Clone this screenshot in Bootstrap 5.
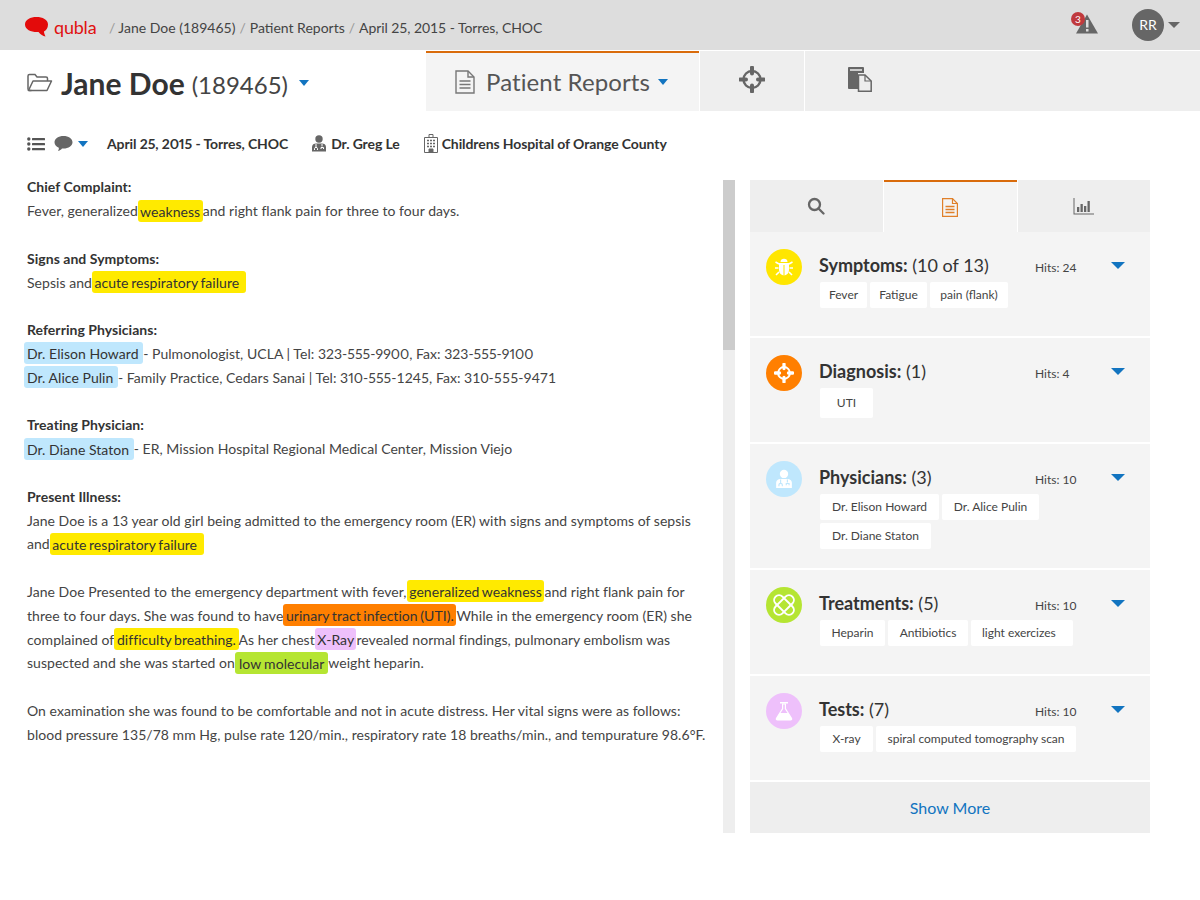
<!DOCTYPE html>
<html lang="en">
<head>
<meta charset="utf-8">
<title>qubla</title>
<link href="https://cdn.jsdelivr.net/npm/bootstrap@5.3.0/dist/css/bootstrap.min.css" rel="stylesheet">
<style>
html,body{height:900px;overflow:hidden}
body{font-family:Lato,"Liberation Sans",sans-serif;font-size:14px;color:#444;background:#fff}
.topbar{height:50px;background:#ddd;padding-left:25px;padding-right:20px}
.logo{margin-top:4px}
.brand{color:#e01010;font-size:18px;font-weight:400;margin-left:5px;width:55px;line-height:1;margin-top:4px;letter-spacing:-.2px}
.crumbs{--bs-breadcrumb-margin-bottom:0;--bs-breadcrumb-divider-color:#999;--bs-breadcrumb-item-padding-x:4px;font-size:14px;color:#444;margin-top:4px}
.crumbs .breadcrumb-item.active{color:#444;letter-spacing:-.07px}
.crumbs .first::before{content:"/";color:#999;padding-right:3px}
.alert-wrap{position:relative;width:22px;height:20px;margin-right:34px;margin-top:-6px}
.count{position:absolute;left:-5px;top:0;width:14px;height:14px;border-radius:50%;background:#c0393d;color:#fff;font-size:10px;line-height:14px;text-align:center}
.avatar{width:32px;height:32px;border-radius:50%;background:#666;color:#fff;font-size:14px;line-height:32px;text-align:center}
.caret-g{width:0;height:0;border-left:6px solid transparent;border-right:6px solid transparent;border-top:6px solid #666;margin-left:4px}
.caret-b{display:inline-block;width:0;height:0;border-left:5.5px solid transparent;border-right:5.5px solid transparent;border-top:6px solid #1274c0}
.tabrow{height:60px;margin-top:1px}
.head-left{width:426px;padding-left:27px}
.head-left svg{margin-top:2px}
.pname{font-size:30px;font-weight:700;color:#333;margin-left:8px;line-height:1;margin-top:4px}
.pid{font-size:24px;font-weight:400;color:#444;margin-left:7px;margin-right:11px;line-height:1;margin-top:8px}
.head-left .caret-b{margin-top:3px}
.toptab{background:#eee;height:60px;margin-right:1px}
.tab-rep{width:273px;background:#f4f4f4;border-top:2px solid #d96b0b;padding-left:29px;font-size:24px;color:#555}
.tab-rep span.lbl{margin-left:11px;margin-right:8px;letter-spacing:.1px}
.tab-t{width:104px}
.tab-t svg,.tab-f svg{margin-top:-4px}
.tab-f{width:110px;margin-right:0}
.tabfill{flex:1;background:#eee}
.infoline{height:69px;padding-left:27px;padding-bottom:4px;font-weight:700;color:#333;font-size:14px;letter-spacing:-.1px;font-variant-numeric:proportional-nums}
.date-txt{margin-left:3px;margin-right:23px}
.main{padding-left:27px;height:653px}
.doc{width:683px;line-height:23.8px;margin-top:-4.6px;color:#444;letter-spacing:.04px}
.doc p{margin:0 0 23.8px}
.doc b{font-weight:700;color:#333;display:block}
.pn{font-variant-numeric:proportional-nums}
.hl{padding:2.5px 0;border-radius:3px;color:#333;word-spacing:-1px}
.hl-y{background:#ffea00}.hl-o{background:#ff7f00}.hl-p{background:#eec0fb}
.hl-b{background:#bfe7fd;margin-left:-3px;padding:2.5px 1px 2.5px 3px;word-spacing:0}
.hl-g{background:#b5e532;padding:2.5px 1px;word-spacing:-.5px}
.hl-end{padding-right:4px}
.scrolltrack{width:12px;height:653px;background:#eee;margin-left:13px}
.scrollthumb{height:170px;background:#ccc}
.side{width:400px;margin-left:15px;height:653px}
.stabs{height:52px}
.stab{background:#eee;height:52px;flex:1}
.stab.on{background:#f4f4f4;border-top:2px solid #d96b0b;margin:0 1px;flex:0 0 133px}
.sitem{background:#f4f4f4;margin-bottom:2px;padding:17px 16px 0;height:104px}
.sitem.tall{height:124px}
.circle{width:36px;height:36px;border-radius:50%;flex:none;margin-right:17px}
.c-y{background:#ffe600}.c-o{background:#ff7f00}.c-b{background:#bfe7fd}.c-g{background:#b5e532}.c-p{background:#eec0fb}
.sbody{flex:1;min-width:0}
.shead{height:36px;margin-top:-3px;padding-top:9px}
.stitle{font-size:18px;color:#333;width:216px;line-height:1.2}
.stitle b{font-weight:700}
.hits{font-size:12px;color:#444;width:76px;padding-top:4px}
.caret-l{width:0;height:0;border-left:7px solid transparent;border-right:7px solid transparent;border-top:7px solid #1274c0;margin-top:7px}
.chips{gap:3px;margin-left:1px}
.chip{background:#fff;font-size:12px;color:#444;height:26px;line-height:25px;text-align:center;border-radius:2px;white-space:nowrap}
.chip.big{height:30px;line-height:30px}
.w47{width:47px}.w53{width:53px}.w57{width:57px}.w65{width:65px}.w78{width:78px}.w80{width:80px}.w97{width:97px}.w102{width:102px;text-align:left;padding-left:11px}.w111{width:111px}.w119{width:119px}.w200{width:200px}
.more{height:51px;background:#eee;color:#1274c0;font-size:16px;text-decoration:none}
</style>
</head>
<body>
<nav class="topbar d-flex align-items-center">
  <svg class="logo" width="24" height="20" viewBox="0 0 24 20"><path fill="#e30b0b" d="M11.500 0C17.500 0 23 2.500 23 7.500C23 11 21 13.500 19 14.500C19 16 19.800 18 20.500 19.500C18 19 15.500 17.500 13.500 15C7 15.500 0 13 0 7.500C0 2.500 5.500 0 11.500 0Z"/></svg>
  <span class="brand">qubla</span>
  <ol class="breadcrumb crumbs align-items-center">
    <li class="breadcrumb-item first">Jane Doe (189465)</li>
    <li class="breadcrumb-item">Patient Reports</li>
    <li class="breadcrumb-item active">April 25, 2015 - Torres, CHOC</li>
  </ol>
  <div class="ms-auto d-flex align-items-center">
    <div class="alert-wrap">
      <svg width="22" height="20" viewBox="0 0 22 20"><path fill="#666" d="M11 0.500L22 19.500H0Z"/><rect x="10" y="6" width="2.500" height="7.500" fill="#ddd"/><rect x="10" y="15" width="2.500" height="2.500" fill="#ddd"/></svg>
      <span class="count">3</span>
    </div>
    <span class="avatar">RR</span><span class="caret-g"></span>
  </div>
</nav>

<div class="tabrow d-flex">
  <div class="head-left d-flex align-items-center">
    <svg width="26" height="19" viewBox="0 0 26 19" fill="none" stroke="#666" stroke-width="1.500"><path d="M4.500 17.500H2.500C1.500 17.500 1 17 1 16V3C1 2 1.500 1.500 2.500 1.500H8L10 4H19C20 4 20.500 4.500 20.500 5.500V8"/><path d="M1.500 17.500L6 8H24.500L20 17.500Z" stroke-linejoin="round"/></svg>
    <span class="pname">Jane Doe</span><span class="pid">(189465)</span><span class="caret-b"></span>
  </div>
  <div class="toptab tab-rep d-flex align-items-center">
    <svg width="20" height="24" viewBox="0 0 20 24" fill="none" stroke="#777" stroke-width="1.400"><path d="M1 1H13L19 7V23H1Z"/><path d="M13 1V7H19"/><path d="M4.500 11H15.500M4.500 14.500H15.500M4.500 18H15.500"/></svg>
    <span class="lbl">Patient Reports</span><span class="caret-b"></span>
  </div>
  <div class="toptab tab-t d-flex align-items-center justify-content-center">
    <svg width="26" height="27" viewBox="0 0 26 27" fill="none" stroke="#666"><circle cx="13" cy="13.500" r="8.500" stroke-width="2.400"/><path d="M13 1.500V7.500M13 19.500V25.500M1 13.500H7M19 13.500H25" stroke-width="4" stroke-linecap="round"/></svg>
  </div>
  <div class="toptab tab-f d-flex align-items-center justify-content-center">
    <svg width="24" height="25" viewBox="0 0 24 25"><path fill="#666" d="M0 1C0 .5 .5 0 1 0H15C15.500 0 16 .5 16 1V6H10V22H1C.5 22 0 21.500 0 21Z"/><rect x="2" y="2" width="12" height="2" fill="#ccc"/><path fill="#eee" stroke="#666" stroke-width="1.500" d="M10.500 8H17L23.200 14V24.200H10.500Z"/><path fill="none" stroke="#666" stroke-width="1.200" d="M17 8V14H23"/></svg>
  </div>
  <div class="tabfill"></div>
</div>

<div class="infoline d-flex align-items-center">
  <svg width="18" height="14" viewBox="0 0 18 14" fill="#555"><circle cx="1.800" cy="2" r="1.700"/><circle cx="1.800" cy="7" r="1.700"/><circle cx="1.800" cy="12" r="1.700"/><rect x="5" y="1" width="13" height="2.200" rx=".5"/><rect x="5" y="6" width="13" height="2.200" rx=".5"/><rect x="5" y="11" width="13" height="2.200" rx=".5"/></svg>
  <svg class="ms-2" width="21" height="17" viewBox="0 0 20 17" fill="#666"><path d="M10 1C15 1 19 3.500 19 7.300C19 11 15 13.600 10 13.600C9.500 13.600 9 13.600 8.500 13.500C7.500 14.800 6 15.700 4.500 16C5.200 15 5.500 13.800 5.300 12.800C2.700 11.700 1 9.700 1 7.300C1 3.500 5 1 10 1Z"/></svg>
  <span class="caret-b ms-1 me-3"></span>
  <span class="date-txt">April 25, 2015 - Torres, CHOC</span>
  <svg class="me-1" width="16" height="17" viewBox="0 0 16 17"><circle cx="8" cy="4" r="3.700" fill="#666"/><path fill="#666" d="M1 16.500V12C1 9.500 3 8.500 5 8.500H11C13 8.500 15 9.500 15 12V16.500Z"/><path fill="none" stroke="#fff" stroke-width="1" d="M5 9V12M11 9V11.500M3.500 15V13.500C3.500 12 6.500 12 6.500 13.500V15M10 14V12.500H12.500V14"/></svg>
  <span class="me-4">Dr. Greg Le</span>
  <svg class="me-1" width="14" height="19" viewBox="0 0 14 19" fill="none" stroke="#666"><path d="M.5 18.500V3.500H13.500V18.500Z"/><path d="M5 3.500V.5H9V3.500"/><path d="M3 6.500H5M6 6.500H8M9 6.500H11M3 9.500H5M6 9.500H8M9 9.500H11M3 12.500H5M6 12.500H8M9 12.500H11" stroke-width="1.500"/><path d="M5 18.500V15H9V18.500" fill="#666"/></svg>
  <span>Childrens Hospital of Orange County</span>
</div>

<div class="main d-flex">
  <div class="doc">
    <p><b>Chief Complaint:</b>Fever, generalized<span class="hl hl-y"> weakness </span>and right flank pain for three to four days.</p>
    <p><b>Signs and Symptoms:</b>Sepsis and<span class="hl hl-y hl-end"> acute respiratory failure&nbsp;</span></p>
    <p><b>Referring Physicians:</b><span class="hl hl-b">Dr. Elison Howard </span>- Pulmonologist, UCLA | Tel: <span class="pn">323-555-9900, Fax: 323-555-9100</span><br><span class="hl hl-b">Dr. Alice Pulin </span>- Family Practice, Cedars Sanai | Tel: <span class="pn">310-555</span>-1245, Fax: 310-555-9471</p>
    <p><b>Treating Physician:</b><span class="hl hl-b">Dr. Diane Staton </span>- ER, Mission Hospital Regional Medical Center, Mission Viejo</p>
    <p><b>Present Illness:</b>Jane Doe is a 13 year old girl being admitted to the emergency room (ER) with signs and symptoms of sepsis and<span class="hl hl-y hl-end"> acute respiratory failure&nbsp;</span></p>
    <p>Jane Doe Presented to the emergency department with fever,<span class="hl hl-y"> generalized weakness </span>and right flank pain for three to four days. She was found to have<span class="hl hl-o"> urinary tract infection (UTI). </span>While in the emergency room (ER) she complained of<span class="hl hl-y"> difficulty breathing. </span>As her chest<span class="hl hl-p"> X-Ray </span>revealed normal findings, pulmonary embolism was suspected and she was started on<span class="hl hl-g"> low molecular </span>weight heparin.</p>
    <p>On examination she was found to be comfortable and not in acute distress. Her vital signs were as follows: blood pressure 135/78 mm Hg, pulse rate 120/min., respiratory rate 18 breaths/min., and tempurature 98.6°F.</p>
  </div>
  <div class="scrolltrack"><div class="scrollthumb"></div></div>
  <div class="side d-flex flex-column">
    <div class="stabs d-flex">
      <div class="stab d-flex align-items-center justify-content-center">
        <svg width="18" height="18" viewBox="0 0 18 18" fill="none" stroke="#666" stroke-width="2.300"><circle cx="7.500" cy="7.500" r="5.500"/><path d="M11.500 11.500L16.500 16.500" stroke-linecap="round"/></svg>
      </div>
      <div class="stab on d-flex align-items-center justify-content-center">
        <svg width="16" height="19" viewBox="0 0 16 19" fill="none" stroke="#e0802a" stroke-width="1.200"><path d="M.6.6H10.500L15.400 5.500V18.400H.6Z"/><path d="M10.500.6V5.500H15.400"/><path d="M3.500 8.500H12.500M3.500 11.500H12.500M3.500 14.500H12.500" stroke-width="1.400"/></svg>
      </div>
      <div class="stab d-flex align-items-center justify-content-center">
        <svg width="21" height="17" viewBox="0 0 21 17" fill="#666"><path d="M.5 0V16.400H21V15.400H1.500V0Z"/><rect x="4" y="9" width="2.300" height="5"/><rect x="7.500" y="6" width="2.300" height="8"/><rect x="11" y="8" width="2.300" height="6"/><rect x="14.500" y="3" width="2.300" height="11"/></svg>
      </div>
    </div>

    <div class="sitem d-flex">
      <span class="circle c-y d-flex align-items-center justify-content-center">
        <svg width="20" height="20" viewBox="0 0 20 20" fill="#fff"><path d="M6.500 5C6.500 3 8 1.800 10 1.800S13.500 3 13.500 5Z"/><path d="M5 6H15V13C15 16 13 18 10.500 18.500V8H9.500V18.500C7 18 5 16 5 13Z"/><path d="M5 7L1.500 5M15 7L18.500 5M4.500 11H1M15.500 11H19M5 15L2 18M15 15L18 18" stroke="#fff" stroke-width="1.600"/></svg>
      </span>
      <div class="sbody">
        <div class="shead d-flex align-items-start"><span class="stitle"><b>Symptoms:</b> (10 of 13)</span><span class="hits">Hits: 24</span><span class="caret-l"></span></div>
        <div class="chips d-flex flex-wrap"><span class="chip w47">Fever</span><span class="chip w57">Fatigue</span><span class="chip w78">pain (flank)</span></div>
      </div>
    </div>

    <div class="sitem d-flex">
      <span class="circle c-o d-flex align-items-center justify-content-center">
        <svg width="20" height="20" viewBox="0 0 26 27" fill="none" stroke="#fff"><circle cx="13" cy="13.500" r="8" stroke-width="2.600"/><path d="M13 1.500V7.500M13 19.500V25.500M1 13.500H7M19 13.500H25" stroke-width="4.400" stroke-linecap="round"/></svg>
      </span>
      <div class="sbody">
        <div class="shead d-flex align-items-start"><span class="stitle"><b>Diagnosis:</b> (1)</span><span class="hits">Hits: 4</span><span class="caret-l"></span></div>
        <div class="chips d-flex flex-wrap"><span class="chip big w53">UTI</span></div>
      </div>
    </div>

    <div class="sitem tall d-flex">
      <span class="circle c-b d-flex align-items-center justify-content-center">
        <svg width="18" height="20" viewBox="0 0 16 17"><circle cx="8" cy="4" r="3.700" fill="#fff"/><path fill="#fff" d="M1 16.500V12C1 9.500 3 8.500 5 8.500H11C13 8.500 15 9.500 15 12V16.500Z"/><path fill="none" stroke="#bfe7fd" stroke-width="1" d="M5 9V12M11 9V11.500M3.500 15V13.500C3.500 12 6.500 12 6.500 13.500V15M10 14V12.500H12.500V14"/></svg>
      </span>
      <div class="sbody">
        <div class="shead d-flex align-items-start"><span class="stitle"><b>Physicians:</b> (3)</span><span class="hits">Hits: 10</span><span class="caret-l"></span></div>
        <div class="chips d-flex flex-wrap"><span class="chip w119">Dr. Elison Howard</span><span class="chip w97">Dr. Alice Pulin</span><span class="chip w111">Dr. Diane Staton</span></div>
      </div>
    </div>

    <div class="sitem d-flex">
      <span class="circle c-g d-flex align-items-center justify-content-center">
        <svg width="26" height="26" viewBox="0 0 24 24" fill="none" stroke="#fff" stroke-width="1.800"><rect x="7.500" y="1" width="9" height="22" rx="4.500" transform="rotate(45 12 12)"/><rect x="7.500" y="1" width="9" height="22" rx="4.500" transform="rotate(-45 12 12)"/></svg>
      </span>
      <div class="sbody">
        <div class="shead d-flex align-items-start"><span class="stitle"><b>Treatments:</b> (5)</span><span class="hits">Hits: 10</span><span class="caret-l"></span></div>
        <div class="chips d-flex flex-wrap"><span class="chip w65">Heparin</span><span class="chip w80">Antibiotics</span><span class="chip w102">light exercizes</span></div>
      </div>
    </div>

    <div class="sitem d-flex">
      <span class="circle c-p d-flex align-items-center justify-content-center">
        <svg width="18" height="20" viewBox="0 0 18 20" fill="#fff"><rect x="5" y="1" width="8" height="1.500"/><path d="M7 2.500H11V7.500L17 17C17.700 18.200 17 19.500 15.500 19.500H2.500C1 19.500 .3 18.200 1 17L7 7.500ZM8.200 3.500V8L5.500 12H12.500L9.800 8V3.500Z" fill-rule="evenodd"/></svg>
      </span>
      <div class="sbody">
        <div class="shead d-flex align-items-start"><span class="stitle"><b>Tests:</b> (7)</span><span class="hits">Hits: 10</span><span class="caret-l"></span></div>
        <div class="chips d-flex flex-wrap"><span class="chip w53">X-ray</span><span class="chip w200">spiral computed tomography scan</span></div>
      </div>
    </div>

    <a class="more d-flex align-items-center justify-content-center" href="#">Show More</a>
  </div>
</div>
<script src="https://cdn.jsdelivr.net/npm/bootstrap@5.3.0/dist/js/bootstrap.bundle.min.js"></script>
</body>
</html>
